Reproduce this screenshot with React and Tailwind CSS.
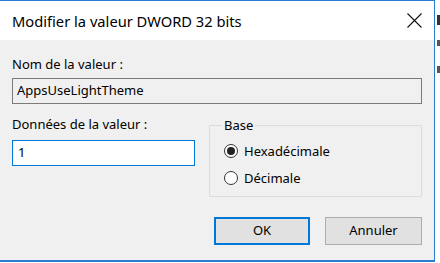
import React from "react";

function Radio({ checked, label }) {
  return (
    <div className="flex items-center h-[27px]">
      <div className="w-[14px] h-[14px] rounded-full border border-[#333] bg-white flex items-center justify-center">
        {checked && <div className="w-[8px] h-[8px] rounded-full bg-[#222]" />}
      </div>
      <span className="ml-[6px] text-[13px] leading-[16px] text-black">{label}</span>
    </div>
  );
}

export default function App() {
  return (
    <div
      className="w-[440px] h-[263px] flex bg-white overflow-hidden"
      style={{ fontFamily: '"Segoe UI", "Noto Sans", sans-serif' }}
    >
      <div className="w-[435px] h-[262px] flex flex-col border-t border-r border-b-2 border-[#2b7cd3] shrink-0">
        <div className="h-[39px] bg-white flex items-center justify-between pl-[12px] pr-[12px]">
          <span className="text-[14.7px] leading-[20px] text-black">Modifier la valeur DWORD 32 bits</span>
          <svg width="15" height="15" viewBox="0 0 15 15">
            <path d="M0.5 0.5 L14.5 14.5 M14.5 0.5 L0.5 14.5" stroke="#111" strokeWidth="1.1" fill="none" />
          </svg>
        </div>
        <div className="flex-1 bg-[#f0f0f0] pl-[12px] pr-[12px] flex flex-col">
          <div className="mt-[16px] text-[13px] leading-[16px] text-black">Nom de la valeur :</div>
          <div className="mt-[6px] h-[26px] border border-[#7a7a7a] bg-[#f0f0f0] flex items-center pl-[4px] text-[13px] text-black">
            AppsUseLightTheme
          </div>
          <div className="mt-[12px] flex">
            <div className="w-[183px] flex flex-col">
              <div className="text-[13px] leading-[16px] text-black">Données de la valeur :</div>
              <div className="mt-[8px] h-[26px] border border-[#0078d7] bg-white flex items-center pl-[5px] text-[13px] text-black">
                1
              </div>
            </div>
            <fieldset className="ml-[14px] flex-1 mt-[1px] h-[80px] border border-[#dcdcdc] rounded-[1px] pl-[14px]">
              <legend className="ml-[-2px] px-[2px] text-[13px] leading-[16px] text-black">Base</legend>
              <div className="mt-[4px] flex flex-col">
                <Radio checked label="Hexadécimale" />
                <Radio label="Décimale" />
              </div>
            </fieldset>
          </div>
          <div className="mt-[20px] flex justify-end gap-[15px]">
            <div className="w-[96px] h-[28px] border-2 border-[#0078d7] bg-[#e1e1e1] flex items-center justify-center text-[13px] text-black">
              OK
            </div>
            <div className="w-[97px] h-[28px] border border-[#adadad] bg-[#e1e1e1] flex items-center justify-center text-[13px] text-black">
              Annuler
            </div>
          </div>
        </div>
      </div>
      <div className="flex-1 flex flex-col pl-[2px]">
        <div className="mt-[15px] w-[3px] h-[10px] bg-[#333]" />
        <div className="mt-[15px] w-[3px] h-[6px] bg-[#555]" />
        <div className="mt-[20px] w-[3px] h-[7px] bg-[#555]" />
      </div>
    </div>
  );
}
